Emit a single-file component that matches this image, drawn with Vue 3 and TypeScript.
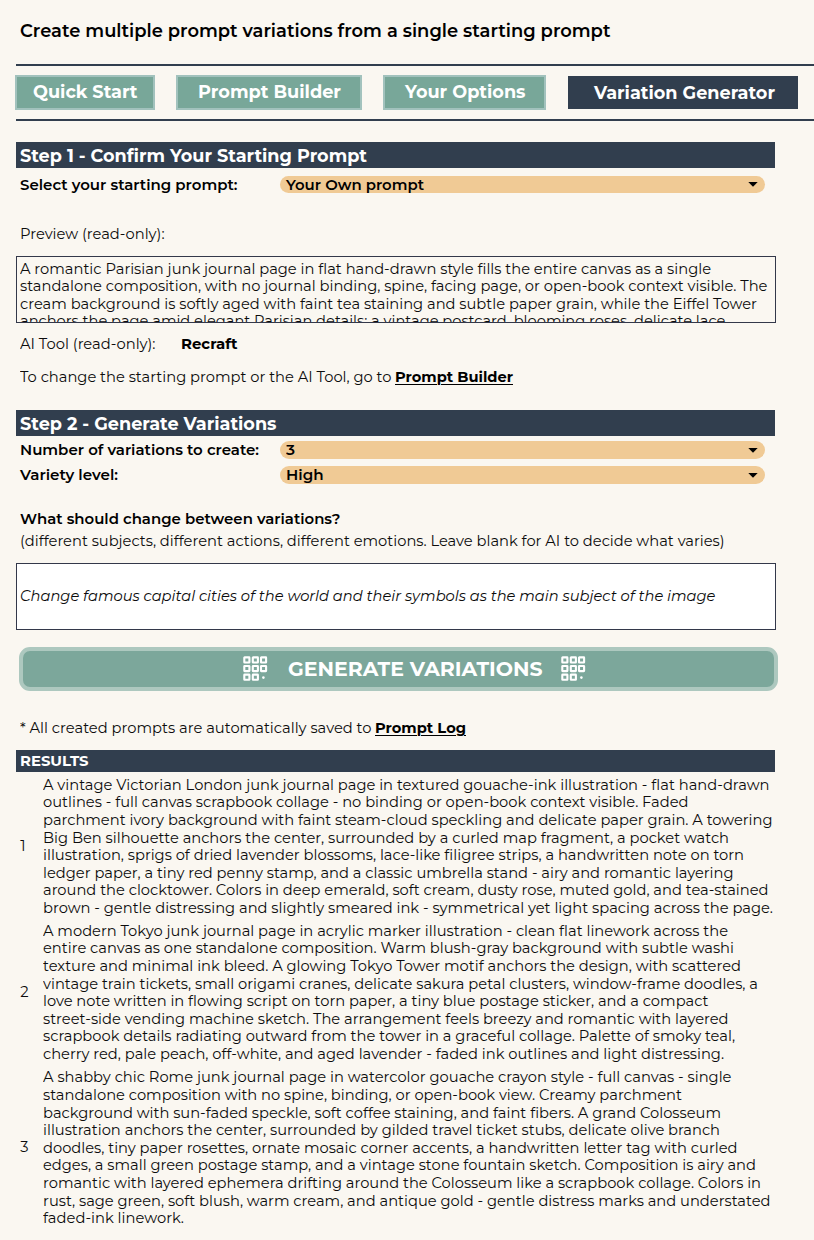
<script setup lang="ts">
import type { Directive } from 'vue'

interface Line { text: string; width: number }
interface Result { id: number; lines: Line[] }

/* Stretches a run of text horizontally so that it fills the given measure. */
const vFit: Directive<HTMLElement, number> = {
  mounted(el, binding) {
    const natural = el.getBoundingClientRect().width
    if (!natural) return
    el.style.transform = `scaleX(${binding.value / natural})`
    el.style.marginRight = `${binding.value - natural}px`
  },
}

const tabs = [
  { label: 'Quick Start', width: 104.5, cls: 'tab-quick' },
  { label: 'Prompt Builder', width: 143, cls: 'tab-builder' },
  { label: 'Your Options', width: 120.5, cls: 'tab-options' },
  { label: 'Variation Generator', width: 181, cls: 'tab-active' },
]

const preview: Line[] = [
  { text: 'A romantic Parisian junk journal page in flat hand-drawn style fills the entire canvas as a single', width: 691 },
  { text: 'standalone composition, with no journal binding, spine, facing page, or open-book context visible. The', width: 747.5 },
  { text: 'cream background is softly aged with faint tea staining and subtle paper grain, while the Eiffel Tower', width: 737 },
  { text: 'anchors the page amid elegant Parisian details: a vintage postcard, blooming roses, delicate lace,', width: 708.5 },
]

const results: Result[] = [
  {
    id: 1,
    lines: [
      { text: 'A vintage Victorian London junk journal page in textured gouache-ink illustration - flat hand-drawn', width: 726.5 },
      { text: 'outlines - full canvas scrapbook collage - no binding or open-book context visible. Faded', width: 645.5 },
      { text: 'parchment ivory background with faint steam-cloud speckling and delicate paper grain. A towering', width: 729.5 },
      { text: 'Big Ben silhouette anchors the center, surrounded by a curled map fragment, a pocket watch', width: 686 },
      { text: 'illustration, sprigs of dried lavender blossoms, lace-like filigree strips, a handwritten note on torn', width: 701 },
      { text: 'ledger paper, a tiny red penny stamp, and a classic umbrella stand - airy and romantic layering', width: 690.5 },
      { text: 'around the clocktower. Colors in deep emerald, soft cream, dusty rose, muted gold, and tea-stained', width: 725.5 },
      { text: 'brown - gentle distressing and slightly smeared ink - symmetrical yet light spacing across the page.', width: 730 },
    ],
  },
  {
    id: 2,
    lines: [
      { text: 'A modern Tokyo junk journal page in acrylic marker illustration - clean flat linework across the', width: 685 },
      { text: 'entire canvas as one standalone composition. Warm blush-gray background with subtle washi', width: 691 },
      { text: 'texture and minimal ink bleed. A glowing Tokyo Tower motif anchors the design, with scattered', width: 698 },
      { text: 'vintage train tickets, small origami cranes, delicate sakura petal clusters, window-frame doodles, a', width: 715 },
      { text: 'love note written in flowing script on torn paper, a tiny blue postage sticker, and a compact', width: 665.5 },
      { text: 'street-side vending machine sketch. The arrangement feels breezy and romantic with layered', width: 685.5 },
      { text: 'scrapbook details radiating outward from the tower in a graceful collage. Palette of smoky teal,', width: 692 },
      { text: 'cherry red, pale peach, off-white, and aged lavender - faded ink outlines and light distressing.', width: 681 },
    ],
  },
  {
    id: 3,
    lines: [
      { text: 'A shabby chic Rome junk journal page in watercolor gouache crayon style - full canvas - single', width: 688.5 },
      { text: 'standalone composition with no spine, binding, or open-book view. Creamy parchment', width: 639 },
      { text: 'background with sun-faded speckle, soft coffee staining, and faint fibers. A grand Colosseum', width: 678 },
      { text: 'illustration anchors the center, surrounded by gilded travel ticket stubs, delicate olive branch', width: 677 },
      { text: 'doodles, tiny paper rosettes, ornate mosaic corner accents, a handwritten letter tag with curled', width: 694.5 },
      { text: 'edges, a small green postage stamp, and a vintage stone fountain sketch. Composition is airy and', width: 713 },
      { text: 'romantic with layered ephemera drifting around the Colosseum like a scrapbook collage. Colors in', width: 718 },
      { text: 'rust, sage green, soft blush, warm cream, and antique gold - gentle distress marks and understated', width: 727.5 },
      { text: 'faded-ink linework.', width: 141 },
    ],
  },
]

const cells = [
  [1.3, 1.4], [9.8, 1.4], [18, 1.4],
  [1.3, 10], [9.8, 10], [18, 10],
  [1.3, 18.6], [9.8, 18.6],
]
</script>

<template>
  <main class="page">
    <header class="title"><h1><span v-fit="590.5" class="fit">Create multiple prompt variations from a single starting prompt</span></h1></header>

    <nav class="tabs">
      <a v-for="t in tabs" :key="t.label" class="tab" :class="t.cls"><span v-fit="t.width" class="fit">{{ t.label }}</span></a>
    </nav>

    <section class="content">
      <h2 class="bar"><span v-fit="347" class="fit">Step 1 - Confirm Your Starting Prompt</span></h2>
      <div class="field field-source">
        <label><span v-fit="217.5" class="fit">Select your starting prompt:</span></label>
        <div class="pill">
          <span v-fit="138" class="fit">Your Own prompt</span>
          <svg class="caret" viewBox="0 0 10 5"><path d="M0.3 0h9.4L5 4.8z" /></svg>
        </div>
      </div>

      <p class="row preview-label"><span v-fit="144.5" class="fit">Preview (read-only):</span></p>
      <div class="box preview">
        <div v-for="l in preview" :key="l.text" class="line"><span v-fit="l.width" class="fit">{{ l.text }}</span></div>
      </div>

      <p class="row tool">
        <span v-fit="135.5" class="fit">AI Tool (read-only):</span>
        <b><span v-fit="56.5" class="fit">Recraft</span></b>
      </p>
      <p class="row change">
        <span v-fit="371.5" class="fit">To change the starting prompt or the AI Tool, go to</span>
        <a class="link"><span v-fit="118" class="fit">Prompt Builder</span></a>
      </p>

      <h2 class="bar"><span v-fit="256.5" class="fit">Step 2 - Generate Variations</span></h2>
      <div class="field field-count">
        <label><span v-fit="239" class="fit">Number of variations to create:</span></label>
        <div class="pill">
          <span v-fit="9" class="fit">3</span>
          <svg class="caret" viewBox="0 0 10 5"><path d="M0.3 0h9.4L5 4.8z" /></svg>
        </div>
      </div>
      <div class="field field-level">
        <label><span v-fit="98" class="fit">Variety level:</span></label>
        <div class="pill">
          <span v-fit="37.5" class="fit">High</span>
          <svg class="caret" viewBox="0 0 10 5"><path d="M0.3 0h9.4L5 4.8z" /></svg>
        </div>
      </div>

      <h3 class="row question"><span v-fit="320.5" class="fit">What should change between variations?</span></h3>
      <p class="row hint"><span v-fit="704.5" class="fit">(different subjects, different actions, different emotions. Leave blank for AI to decide what varies)</span></p>
      <div class="box entry"><em v-fit="695.5" class="fit">Change famous capital cities of the world and their symbols as the main subject of the image</em></div>

      <button class="generate" type="button">
        <svg class="grid" viewBox="0 0 25 26"><rect v-for="(c, i) in cells" :key="i" :x="c[0]" :y="c[1]" width="5.1" height="5.1" rx="0.3" /><circle cx="20.4" cy="21.6" r="1.3" /></svg>
        <span class="generate-text"><span v-fit="254.5" class="fit">GENERATE VARIATIONS</span></span>
        <svg class="grid" viewBox="0 0 25 26"><rect v-for="(c, i) in cells" :key="i" :x="c[0]" :y="c[1]" width="5.1" height="5.1" rx="0.3" /><circle cx="20.4" cy="21.6" r="1.3" /></svg>
      </button>

      <p class="row note">
        <span v-fit="351.5" class="fit">* All created prompts are automatically saved to</span>
        <a class="link"><span v-fit="91" class="fit">Prompt Log</span></a>
      </p>

      <h2 class="bar bar-results"><span v-fit="68.5" class="fit">RESULTS</span></h2>
      <article v-for="r in results" :key="r.id" class="result" :class="'result-' + r.id">
        <span class="num">{{ r.id }}</span>
        <div class="result-text">
          <div v-for="l in r.lines" :key="l.text" class="line"><span v-fit="l.width" class="fit">{{ l.text }}</span></div>
        </div>
      </article>
    </section>
  </main>
</template>

<style>
html, body { margin: 0; background: #faf7f1; }
</style>

<style scoped>
* { box-sizing: border-box; }
.page {
  width: 814px;
  height: 1240px;
  overflow: hidden;
  background: #faf7f1;
  color: #0c0c0c;
  font: 400 14.667px/17.6px Montserrat, Inter, "Noto Sans", sans-serif;
}
h1, h2, h3, p { margin: 0; font-size: inherit; }
.fit { display: inline-block; flex: none; white-space: nowrap; transform-origin: 0 50%; }
.title { height: 64px; padding: 19px 0 0 20.2px; color: #000; }
.title h1 { font-size: 18px; font-weight: 600; line-height: 24px; }

.tabs {
  display: flex;
  align-items: center;
  height: 57px;
  margin-left: 16px;
  border-top: 2px solid #313e4e;
  border-bottom: 2px solid #313e4e;
}
.tab {
  display: flex;
  flex: none;
  align-items: center;
  justify-content: center;
  height: 35px;
  border: 2px solid #a2c2bd;
  background: #78a799;
  color: #fff;
  font-size: 18px;
  font-weight: 700;
  padding: 0 0 0 1px;
}
.tab-quick { width: 140px; margin-left: -1px; }
.tab-builder { width: 186px; margin-left: 21px; }
.tab-options { width: 163px; margin-left: 21px; }
.tab-active { width: 230px; height: 33px; margin-left: 22px; padding: 2px 0 0 2px; border: 0; background: #313e4e; }

.content { display: flex; flex-direction: column; width: 760px; margin: 21px 0 0 16px; }
.bar {
  display: flex;
  align-items: center;
  width: 759px;
  height: 26px;
  padding: 3px 0 0 4.3px;
  background: #313e4e;
  color: #fff;
  font-size: 18px;
  font-weight: 700;
}
.bar-results { height: 22px; padding-top: 1px; font-size: 14.667px; }
.field { display: flex; align-items: center; color: #000; font-weight: 600; }
.field label { width: 264px; padding: 1px 0 0 4.2px; }
.pill {
  display: flex;
  align-items: center;
  justify-content: space-between;
  width: 485px;
  height: 18px;
  padding: 0 7px 0 6.2px;
  border-radius: 9px;
  background: #f0ca95;
}
.pill .fit { margin-top: 1px; }
.caret { width: 10px; height: 5px; fill: #000; }
.field-source { height: 17px; margin-top: 8px; }
.field-source .pill { height: 17px; }
.field-source label, .field-count label { padding-top: 2.4px; }
.field-source .pill .fit, .field-count .pill .fit { margin-top: 2.4px; }
.field-count { height: 18px; margin-top: 5px; }
.field-level { height: 18px; margin-top: 7px; }

.row { display: flex; align-items: center; height: 18px; padding: 1px 0 0 4.2px; }
.preview-label { margin-top: 32px; }
.box { width: 760px; height: 67px; border: 1px solid #33384a; }
.preview { margin-top: 13px; padding: 3.7px 0 0 3.2px; overflow: hidden; }
.line { display: flex; height: 17.6px; }
.tool { margin-top: 12px; }
.tool b { margin-left: 25px; color: #000; font-weight: 700; }
.change { margin: 15px 0 24px; }
.link { margin-left: 3.3px; color: #000; font-weight: 700; }
.link .fit { text-decoration: underline; text-decoration-thickness: 1px; text-underline-offset: 2px; }
.question { margin-top: 26px; color: #000; font-weight: 600; }
.hint { margin-top: 4px; }
.entry { display: flex; align-items: center; margin-top: 13px; padding-left: 3.2px; background: #fff; }

.generate {
  display: flex;
  align-items: center;
  width: 759px;
  height: 44px;
  margin: 17px 0 0 3px;
  padding: 0 0 0 219.5px;
  border: 4px solid #adc8bf;
  border-radius: 11px;
  background: #7ca79b;
  color: #fff;
  font: 700 20.4px/24px Montserrat, Inter, sans-serif;
}
.generate-text { width: 256px; margin: 0 18.5px 0 19.3px; }
.grid { flex: none; width: 25px; height: 26px; fill: none; stroke: #fff; stroke-width: 2.1; }
.grid circle { fill: #fff; stroke: none; }
.note { margin: 28px 0 13px; }

.result { display: flex; align-items: center; height: 146.5px; }
.result-3 { height: 163px; }
.num { width: 27.2px; padding: 2.6px 0 0 4.2px; font-size: 14.667px; }
.result-text { padding-top: 3px; }
.result-1 .result-text { padding-top: 3.8px; }
.result-3 .result-text { padding-top: 4.2px; }
</style>
